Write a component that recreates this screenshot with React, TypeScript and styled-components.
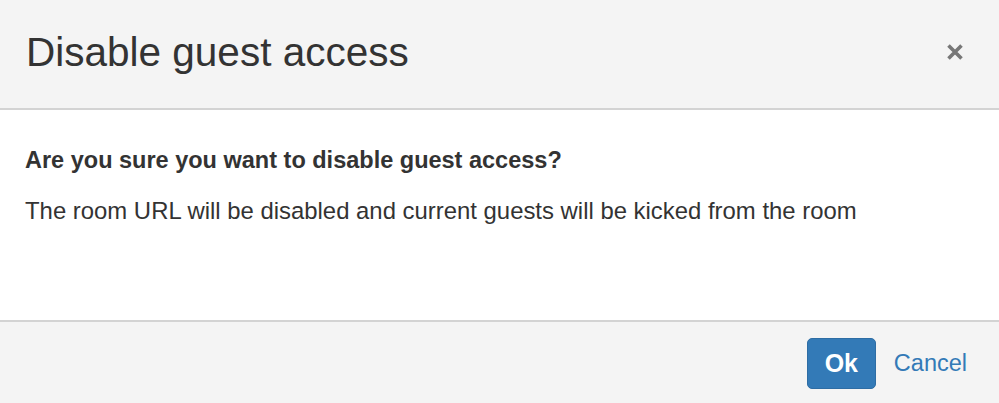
import React from "react";
import styled, { createGlobalStyle } from "styled-components";

const Global = createGlobalStyle`
  html, body { margin: 0; padding: 0; background: #ffffff; }
  body { font-family: "Liberation Sans", Arial, Helvetica, sans-serif; color: #333333; }
`;

const Dialog = styled.div`
  width: 999px;
  height: 403px;
  display: flex;
  flex-direction: column;
  background: #ffffff;
`;

const Header = styled.div`
  flex: none;
  height: 110px;
  box-sizing: border-box;
  display: flex;
  align-items: center;
  justify-content: space-between;
  padding: 0 34px 4px 26px;
  background: #f4f4f4;
  border-bottom: 2px solid #d3d3d3;
`;

const Title = styled.h1`
  margin: 0;
  font-size: 40.5px;
  line-height: 46px;
  font-weight: 400;
  color: #333333;
`;

const Close = styled.button`
  border: none;
  background: transparent;
  padding: 0;
  width: 20px;
  height: 20px;
  display: flex;
  align-items: center;
  justify-content: center;
  cursor: pointer;
  margin-top: 0;
`;

const Body = styled.div`
  flex: 1;
  padding: 37px 25px 0 25px;
  display: flex;
  flex-direction: column;
  gap: 23px;
`;

const Question = styled.p`
  margin: 0;
  font-size: 23.5px;
  font-weight: 700;
  color: #333333;
`;

const Message = styled.p`
  margin: 0;
  font-size: 23.9px;
  font-weight: 400;
  color: #333333;
`;

const Footer = styled.div`
  height: 83px;
  flex: none;
  box-sizing: border-box;
  background: #f4f4f4;
  border-top: 2px solid #d3d3d3;
  display: flex;
  align-items: center;
  justify-content: flex-end;
  gap: 18px;
  padding: 2px 32px 0 0;
`;

const OkButton = styled.button`
  width: 69px;
  height: 51px;
  border: 1px solid #2e6da4;
  border-radius: 5px;
  background: #337ab7;
  color: #ffffff;
  font-family: inherit;
  font-size: 25px;
  font-weight: 700;
  cursor: pointer;
  padding: 0;
  margin-right: 0;
`;

const CancelLink = styled.a`
  color: #337ab7;
  font-size: 23.5px;
  text-decoration: none;
  cursor: pointer;
`;

export default function App() {
  return (
    <>
      <Global />
      <Dialog>
        <Header>
          <Title>Disable guest access</Title>
          <Close aria-label="Close">
            <svg width="18" height="18" viewBox="0 0 18 18">
              <path d="M2.5 2.5 L15.5 15.5 M15.5 2.5 L2.5 15.5" stroke="#777777" strokeWidth="3.6" strokeLinecap="butt" />
            </svg>
          </Close>
        </Header>
        <Body>
          <Question>Are you sure you want to disable guest access?</Question>
          <Message>The room URL will be disabled and current guests will be kicked from the room</Message>
        </Body>
        <Footer>
          <OkButton>Ok</OkButton>
          <CancelLink>Cancel</CancelLink>
        </Footer>
      </Dialog>
    </>
  );
}
